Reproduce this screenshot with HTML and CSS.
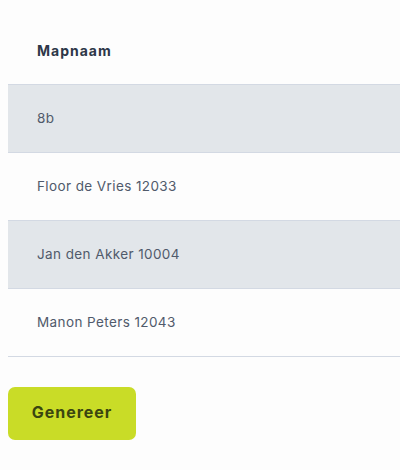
FILE: index.html
```html
<!DOCTYPE html>
<html>
<head>
<meta charset="utf-8">
<link rel="stylesheet" href="styles.css">
</head>
<body>
<div class="panel">
  <table class="maps">
    <thead>
      <tr><th>Mapnaam</th></tr>
    </thead>
    <tbody>
      <tr class="alt"><td>8b</td></tr>
      <tr><td>Floor de Vries 12033</td></tr>
      <tr class="alt"><td>Jan den Akker 10004</td></tr>
      <tr><td>Manon Peters 12043</td></tr>
    </tbody>
  </table>
  <div class="actions">
    <button class="btn">Genereer</button>
  </div>
  <div class="divider"></div>
</div>
</body>
</html>
```
FILE: styles.css
```css
html, body {
  background: #fdfdfd;
}
body {
  margin: 8px 0 0 8px;
  font-family: Inter, "Open Sans", sans-serif;
}
.panel {
  width: 100%;
}
.maps {
  width: 100%;
  border-collapse: collapse;
}
.maps th {
  text-align: left;
  font-weight: 700;
  font-size: 14px;
  letter-spacing: 1px;
  color: #2d3748;
  padding: 32px 0 24px 29px;
  height: 20px;
  border-bottom: 1px solid #d3d9e3;
}
.maps td {
  font-size: 13.5px;
  letter-spacing: 0.4px;
  color: #505a6b;
  padding: 0 0 2px 29px;
  height: 65px;
  border-bottom: 1px solid #d3d9e3;
}
.maps tr.alt td {
  background: #e2e6ea;
}
.actions {
  padding-top: 30px;
}
.btn {
  width: 128px;
  height: 53px;
  background: #c9dc27;
  border: none;
  border-radius: 7px;
  color: #3a4510;
  font-family: inherit;
  font-weight: 700;
  font-size: 16px;
  letter-spacing: 1px;
  padding: 0 0 3px;
}
.divider {
  margin-top: 30px;
  border-top: 1px solid #d3d9e3;
}
```
